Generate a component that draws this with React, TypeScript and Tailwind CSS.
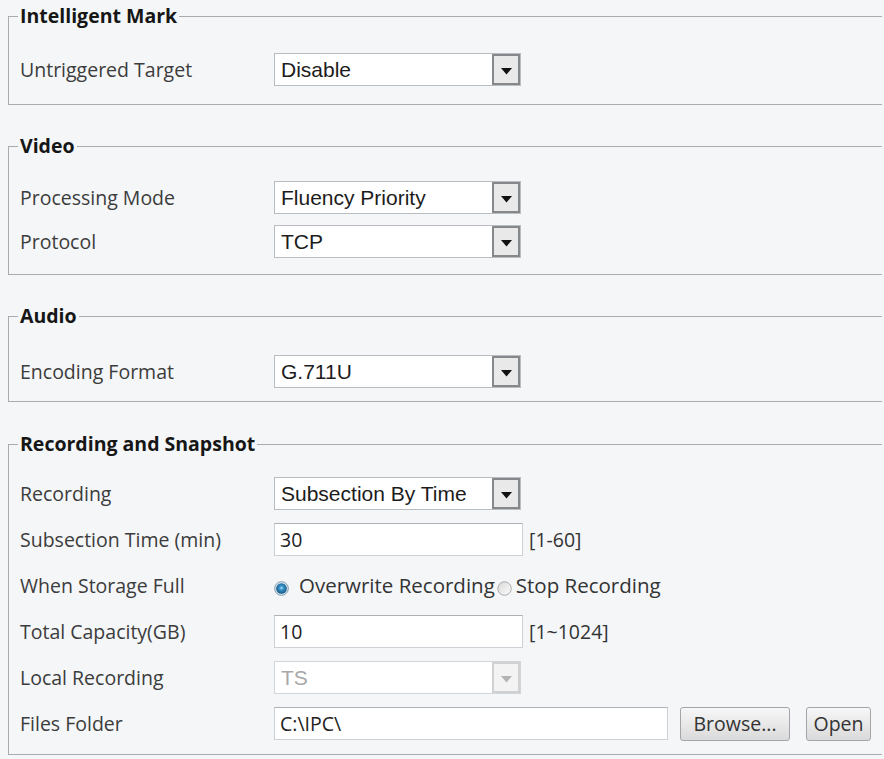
import React from "react"

const labelCls = "w-[254px] shrink-0 font-['Open_Sans',sans-serif] text-[19.5px] leading-[33px] text-[#3c3c3c]"

function Arrow({ disabled }: { disabled?: boolean }) {
	return (
		<svg width="11" height="7" viewBox="0 0 11 7" className="mt-[3px]">
			<path d="M0 0H11L5.5 6.5Z" fill={disabled ? "#b4b4b4" : "#111"} />
		</svg>
	)
}

function Select({ value, disabled }: { value: string; disabled?: boolean }) {
	return (
		<div
			className={`flex h-[33px] w-[247px] items-stretch border bg-white ${
				disabled ? "border-[#d2d5d8]" : "border-[#b9bdc1]"
			}`}>
			<span
				className={`flex flex-1 items-center pl-[6px] font-['Liberation_Sans',Arial,sans-serif] text-[21px] ${
					disabled ? "text-[#a8a8a8]" : "text-[#1c1c1c]"
				}`}>
				{value}
			</span>
			<span
				className={`flex w-[28px] items-center justify-center border-2 ${
					disabled ? "border-[#cfd1d3] bg-[#f3f3f3]" : "border-[#86898c] bg-[#e9e9e9]"
				}`}>
				<Arrow disabled={disabled} />
			</span>
		</div>
	)
}

function TextInput({ value, width }: { value: string; width: string }) {
	return (
		<div
			className={`flex h-[33px] ${width} items-center border border-[#cdd1d5] border-t-[#aeb2b6] bg-white pl-[5px] font-['Open_Sans',sans-serif] text-[19.5px] text-[#222]`}>
			{value}
		</div>
	)
}

function Radio({ checked }: { checked?: boolean }) {
	return (
		<svg width="15" height="15" viewBox="0 0 14 14" className="mt-[6px] shrink-0">
			<defs>
				<radialGradient id="rOn" cx="50%" cy="45%" r="55%">
					<stop offset="0%" stopColor="#c4e9fc" />
					<stop offset="28%" stopColor="#3d9cd4" />
					<stop offset="100%" stopColor="#17547f" />
				</radialGradient>
				<linearGradient id="rOff" x1="0" y1="0" x2="1" y2="1">
					<stop offset="0%" stopColor="#d6d6d6" />
					<stop offset="100%" stopColor="#ffffff" />
				</linearGradient>
			</defs>
			{checked ? (
				<>
					<circle cx="7" cy="7" r="6.4" fill="#dde9f1" stroke="#6f8ea3" strokeWidth="0.8" />
					<circle cx="7" cy="7" r="5" fill="url(#rOn)" />
				</>
			) : (
				<circle cx="7" cy="7" r="6.3" fill="url(#rOff)" stroke="#a6a9ac" strokeWidth="0.9" />
			)}
		</svg>
	)
}

function Btn({ children, className }: { children: React.ReactNode; className?: string }) {
	return (
		<div
			className={`flex h-[34px] items-center justify-center rounded-[3px] border border-[#a3a5a8] bg-gradient-to-b from-[#f7f7f7] to-[#dadada] font-['Open_Sans',sans-serif] text-[19.5px] text-[#333] ${className ?? ""}`}>
			{children}
		</div>
	)
}

function Row({ label, children }: { label: string; children: React.ReactNode }) {
	return (
		<div className="flex h-[33px] items-center pl-[2px]">
			<span className={labelCls}>{label}</span>
			{children}
		</div>
	)
}

function Group({ title, className, children }: { title: string; className: string; children: React.ReactNode }) {
	return (
		<fieldset className={`ml-2 mr-[2px] border border-r-0 border-[#a8acb0] pl-[9px] ${className}`}>
			<legend className="px-[2px] font-['Open_Sans',sans-serif] text-[19.5px] font-bold leading-[22px] text-[#161616]">
				{title}
			</legend>
			{children}
		</fieldset>
	)
}

const Bracket = ({ text }: { text: string }) => (
	<span className="ml-[6px] font-['Open_Sans',sans-serif] text-[19.5px] text-[#333]">{text}</span>
)

export default function App() {
	return (
		<div className="min-h-screen w-full bg-[#f4f6f8] pt-[5px]">
			<Group title="Intelligent Mark" className="pt-[26px] pb-[18px]">
				<Row label="Untriggered Target">
					<Select value="Disable" />
				</Row>
			</Group>

			<Group title="Video" className="mt-[30px] pt-[24px] pb-[16px]">
				<div className="flex flex-col gap-[11px]">
					<Row label="Processing Mode">
						<Select value="Fluency Priority" />
					</Row>
					<Row label="Protocol">
						<Select value="TCP" />
					</Row>
				</div>
			</Group>

			<Group title="Audio" className="mt-[30px] pt-[28px] pb-[13px]">
				<Row label="Encoding Format">
					<Select value="G.711U" />
				</Row>
			</Group>

			<Group title="Recording and Snapshot" className="mt-[31px] pt-[22px] pb-[14px]">
				<div className="flex flex-col gap-[13px]">
					<Row label="Recording">
						<Select value="Subsection By Time" />
					</Row>
					<Row label="Subsection Time (min)">
						<TextInput value="30" width="w-[249px]" />
						<Bracket text="[1-60]" />
					</Row>
					<Row label="When Storage Full">
						<div className="flex items-center font-['Open_Sans',sans-serif] text-[20.5px] text-[#333]">
							<Radio checked />
							<span className="ml-[10px]">Overwrite Recording</span>
							<span className="ml-[2px]" />
							<Radio />
							<span className="ml-[4px]">Stop Recording</span>
						</div>
					</Row>
					<Row label="Total Capacity(GB)">
						<TextInput value="10" width="w-[249px]" />
						<Bracket text="[1~1024]" />
					</Row>
					<Row label="Local Recording">
						<Select value="TS" disabled />
					</Row>
					<Row label="Files Folder">
						<TextInput value="C:\IPC\" width="w-[394px]" />
						<Btn className="ml-[12px] w-[110px]">Browse...</Btn>
						<Btn className="ml-[16px] w-[65px]">Open</Btn>
					</Row>
				</div>
			</Group>
		</div>
	)
}
